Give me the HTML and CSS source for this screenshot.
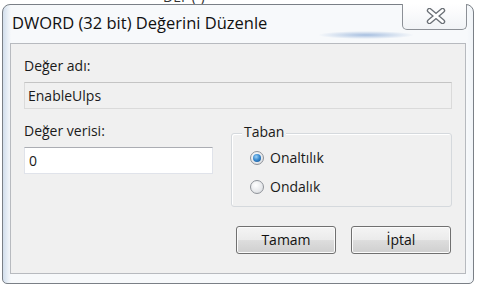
FILE: index.html
```html
<!DOCTYPE html>
<html lang="tr">
<head>
<meta charset="utf-8">
<title>DWORD (32 bit) Değerini Düzenle</title>
<link rel="stylesheet" href="styles.css">
</head>
<body>
<div class="page">
  <div class="behind"><span class="behind-text">DEF (-)</span></div>
  <div class="window">
    <div class="titlebar">
      <span class="title">DWORD (32 bit) Değerini Düzenle</span>
      <div class="close">
        <svg width="20" height="16" viewBox="0 0 20 16">
          <path d="M3.5 2.5 L16.5 13.5 M16.5 2.5 L3.5 13.5" stroke="#6b7076" stroke-width="5.4" stroke-linecap="round" fill="none"/>
          <path d="M3.5 2.5 L16.5 13.5 M16.5 2.5 L3.5 13.5" stroke="#ffffff" stroke-width="2.8" stroke-linecap="round" fill="none"/>
        </svg>
      </div>
    </div>
    <div class="client">
      <div class="label">Değer adı:</div>
      <div class="field readonly">EnableUlps</div>
      <div class="row">
        <div class="col-left">
          <div class="label">Değer verisi:</div>
          <div class="field input">0</div>
        </div>
        <div class="group">
          <div class="legend">Taban</div>
          <div class="radio first"><span class="dot checked"></span><span>Onaltılık</span></div>
          <div class="radio"><span class="dot"></span><span>Ondalık</span></div>
        </div>
      </div>
      <div class="buttons">
        <div class="btn">Tamam</div>
        <div class="btn">İptal</div>
      </div>
    </div>
  </div>
</div>
</body>
</html>
```

FILE: styles.css
```css
* { box-sizing: border-box; }
html, body { margin: 0; padding: 0; background: #ffffff; }
body {
  font-family: "Open Sans", "DejaVu Sans", sans-serif;
  color: #1a1a1a;
  width: 480px;
  height: 286px;
  overflow: hidden;
}
.page { padding-left: 2px; }
.behind {
  height: 4px;
  overflow: hidden;
  padding-left: 161px;
}
.behind-text {
  display: block;
  font-size: 14px;
  line-height: 16px;
  margin-top: -11px;
  color: #333;
}
.window {
  width: 472px;
  height: 280px;
  border: 1px solid #7a7f86;
  border-radius: 8px 8px 5px 5px;
  background: linear-gradient(to right, #d2deec 0, #eaf0f7 5px, #f7f9fb 8px, #f7f9fb 464px, #eef2f7 472px);
}
.titlebar {
  height: 38px;
  display: flex;
  align-items: flex-start;
  background: radial-gradient(ellipse 48px 4px at 363px 30px, rgba(140, 172, 215, 0.75), rgba(140, 172, 215, 0) 100%);
}
.title {
  font-size: 16.5px;
  line-height: 20px;
  padding-left: 9px;
  padding-top: 8px;
  color: #111;
}
.close {
  margin-left: auto;
  margin-right: 6px;
  margin-top: -1px;
  width: 65px;
  height: 26px;
  border: 1px solid #8c9096;
  border-top: none;
  border-radius: 0 0 5px 5px;
  background: linear-gradient(#ffffff, #f1f3f6);
  display: flex;
  align-items: center;
  justify-content: center;
  padding-left: 2px;
  padding-bottom: 1px;
}
.client {
  margin-left: 7px;
  width: 456px;
  height: 231px;
  border: 1px solid #b7babf;
  background: #f0f0f0;
  padding: 14px 13px 0 13px;
  font-size: 14px;
  line-height: 16px;
}
.label { line-height: 16px; }
.field {
  height: 27px;
  line-height: 25px;
  padding-left: 3px;
  margin-top: 8px;
}
.readonly {
  width: 428px;
  background: #f0f0f0;
  border: 1px solid #dadada;
  border-top-color: #c4c4c4;
}
.input {
  width: 189px;
  background: #ffffff;
  border: 1px solid #e0e3ea;
  border-top-color: #abadb3;
  padding-left: 4px;
}
.row {
  display: flex;
  align-items: flex-start;
  margin-top: 14px;
}
.col-left { width: 189px; }
.group {
  margin-left: 18px;
  margin-top: 10px;
  width: 221px;
  height: 74px;
  border: 1px solid #d5d9dd;
  border-radius: 3px;
  box-shadow: inset 1px 1px 0 #ffffff;
  padding-left: 18px;
  line-height: 16px;
}
.legend {
  display: block;
  width: max-content;
  height: 16px;
  margin-top: -10px;
  margin-left: -8px;
  padding: 0 2px;
  line-height: 16px;
  background: #f0f0f0;
}
.radio {
  display: flex;
  align-items: center;
  height: 20px;
  margin-top: 9px;
}
.radio.first { margin-top: 8px; }
.dot {
  width: 14px;
  height: 14px;
  border-radius: 50%;
  border: 1px solid #8f9399;
  background: radial-gradient(circle at 40% 35%, #ffffff 0, #e6e8eb 60%, #cfd3d8 100%);
  margin-right: 6px;
  display: flex;
  align-items: center;
  justify-content: center;
}
.dot.checked::after {
  content: "";
  width: 8px;
  height: 8px;
  border-radius: 50%;
  background: radial-gradient(circle at 40% 35%, #9fd2f6 0, #3a8bd0 45%, #0e4a8a 100%);
}
.buttons {
  display: flex;
  justify-content: flex-end;
  gap: 15px;
  margin-top: 19px;
  padding-right: 1px;
}
.btn {
  width: 100px;
  height: 28px;
  border: 1px solid #707070;
  border-radius: 3px;
  background: linear-gradient(#f4f4f4 0, #ebebeb 48%, #dddddd 52%, #cfcfcf 100%);
  box-shadow: inset 0 0 0 1px #fbfbfb;
  text-align: center;
  line-height: 26px;
  color: #111;
}
```
